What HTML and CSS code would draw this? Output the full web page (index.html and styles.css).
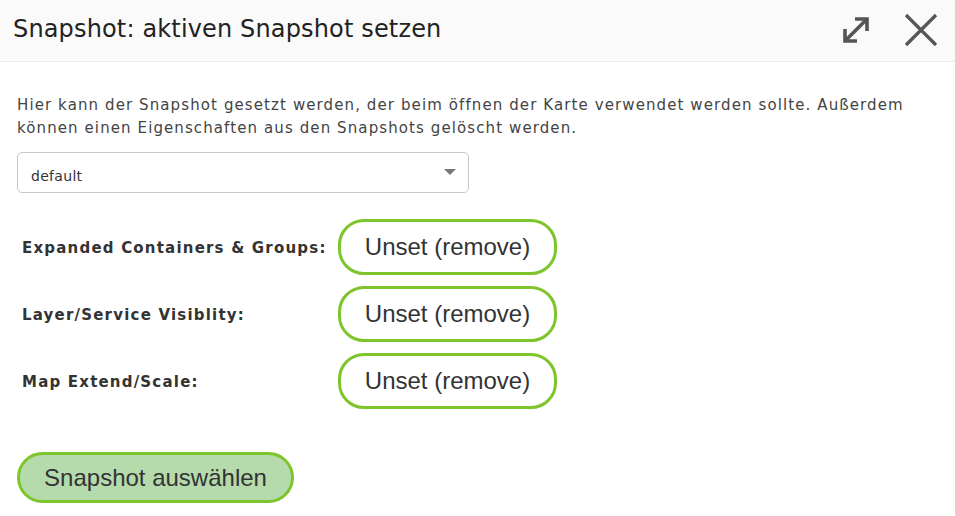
FILE: index.html
```html
<!DOCTYPE html>
<html lang="de">
<head>
<meta charset="utf-8">
<link rel="stylesheet" href="styles.css">
</head>
<body>
<div class="dialog">
  <header class="header">
    <h1 class="title">Snapshot: aktiven Snapshot setzen</h1>
    <div class="tools">
      <svg class="icon expand" width="32" height="32" viewBox="0 0 32 32">
        <path d="M6 26 L26 6" stroke="#555" stroke-width="3.6" fill="none"/>
        <path d="M15 5 L27 5 L27 17" stroke="#555" stroke-width="3.6" fill="none" stroke-linejoin="miter"/>
        <path d="M5 15 L5 27 L17 27" stroke="#555" stroke-width="3.6" fill="none" stroke-linejoin="miter"/>
      </svg>
      <svg class="icon close" width="34" height="34" viewBox="0 0 34 34">
        <path d="M2 2 L32 32 M32 2 L2 32" stroke="#555" stroke-width="3.2" fill="none"/>
      </svg>
    </div>
  </header>
  <main class="content">
    <p class="desc">Hier kann der Snapshot gesetzt werden, der beim öffnen der Karte verwendet werden sollte. Außerdem können einen Eigenschaften aus den Snapshots gelöscht werden.</p>
    <div class="select">
      <span class="select-value">default</span>
      <span class="caret"></span>
    </div>
    <div class="rows">
      <div class="row">
        <span class="label">Expanded Containers &amp; Groups:</span>
        <button class="btn-unset">Unset (remove)</button>
      </div>
      <div class="row">
        <span class="label">Layer/Service Visiblity:</span>
        <button class="btn-unset">Unset (remove)</button>
      </div>
      <div class="row">
        <span class="label">Map Extend/Scale:</span>
        <button class="btn-unset">Unset (remove)</button>
      </div>
    </div>
    <button class="btn-primary">Snapshot auswählen</button>
  </main>
</div>
</body>
</html>
```
FILE: styles.css
```css
html, body {
  margin: 0;
  padding: 0;
  background: #fff;
}
.dialog {
  width: 955px;
  height: 516px;
  overflow: hidden;
  font-family: "DejaVu Sans", Verdana, sans-serif;
}
.header {
  height: 61px;
  background: #fafafa;
  border-bottom: 1px solid #ececec;
  display: flex;
  align-items: center;
  justify-content: space-between;
  padding: 0 17px 0 13px;
}
.title {
  margin: 0;
  font-weight: normal;
  font-size: 24px;
  letter-spacing: 0.15px;
  color: #222;
  padding-bottom: 4px;
}
.tools {
  display: flex;
  align-items: center;
  gap: 32px;
}
.icon { display: block; }
.expand { margin-top: -2px; }
.close { margin-top: -2px; }
.content {
  padding: 0 17px;
}
.desc {
  margin: 32px 0 0;
  font-size: 15px;
  letter-spacing: 1.1px;
  line-height: 23px;
  color: #444;
}
.select {
  margin-top: 12px;
  width: 452px;
  height: 41px;
  box-sizing: border-box;
  border: 1px solid #c8c8c8;
  border-radius: 5px;
  display: flex;
  align-items: center;
  justify-content: space-between;
  padding: 0 12px 0 13px;
}
.select-value {
  font-size: 14px;
  letter-spacing: 0.3px;
  color: #333;
  padding-top: 6px;
}
.caret {
  width: 0;
  height: 0;
  border-left: 6px solid transparent;
  border-right: 6px solid transparent;
  border-top: 6px solid #777;
  margin-bottom: 2px;
}
.rows {
  margin-top: 26px;
  display: flex;
  flex-direction: column;
  gap: 11px;
}
.row {
  display: grid;
  grid-template-columns: 321px 219px;
  align-items: center;
}
.label {
  padding-left: 5px;
  padding-top: 2px;
  font-weight: bold;
  font-size: 15px;
  letter-spacing: 1.2px;
  color: #333;
}
.btn-unset, .btn-primary {
  font-family: "Liberation Sans", Arial, sans-serif;
  font-size: 24px;
  color: #333;
  border: 3px solid #7dc52a;
  cursor: pointer;
}
.btn-unset {
  height: 56px;
  width: 219px;
  background: #fff;
  border-radius: 26px;
  padding: 0;
}
.btn-primary {
  margin-top: 43px;
  height: 51px;
  width: 277px;
  background: #b5dbad;
  border-radius: 26px;
  padding: 0;
}
```
